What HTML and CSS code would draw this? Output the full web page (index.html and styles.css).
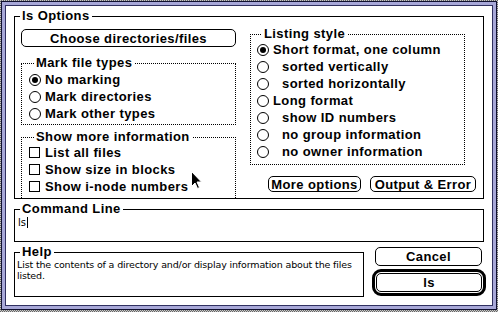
FILE: index.html
```html
<!DOCTYPE html>
<html lang="en">
<head>
    <meta charset="UTF-8">
    <title>ls Options</title>
    <link rel="stylesheet" href="styles.css">
</head>
<body>
    <div class="window">
        <fieldset class="group options">
            <legend>ls Options</legend>
            <div class="options-grid">
                <div class="col">
                    <div class="btn choose">Choose directories/files</div>
                    <fieldset class="group dotted marks">
                        <legend>Mark file types</legend>
                        <div class="row"><span class="radio on"></span>No marking</div>
                        <div class="row"><span class="radio"></span>Mark directories</div>
                        <div class="row"><span class="radio"></span>Mark other types</div>
                    </fieldset>
                    <fieldset class="group dotted info">
                        <legend>Show more information</legend>
                        <div class="row"><span class="check"></span>List all files</div>
                        <div class="row"><span class="check"></span>Show size in blocks</div>
                        <div class="row"><span class="check"></span>Show i-node numbers</div>
                    </fieldset>
                </div>
                <div class="col">
                    <fieldset class="group dotted listing">
                        <legend>Listing style</legend>
                        <div class="row"><span class="radio on"></span>Short format, one column</div>
                        <div class="row sub"><span class="radio"></span>sorted vertically</div>
                        <div class="row sub"><span class="radio"></span>sorted horizontally</div>
                        <div class="row"><span class="radio"></span>Long format</div>
                        <div class="row sub"><span class="radio"></span>show ID numbers</div>
                        <div class="row sub"><span class="radio"></span>no group information</div>
                        <div class="row sub"><span class="radio"></span>no owner information</div>
                    </fieldset>
                    <div class="btn-row">
                        <div class="btn more">More options</div>
                        <div class="btn output">Output &amp; Error</div>
                    </div>
                </div>
            </div>
        </fieldset>

        <fieldset class="group command">
            <legend>Command Line</legend>
            <div class="cmd">ls<span class="caret"></span></div>
        </fieldset>

        <div class="bottom">
            <fieldset class="group help">
                <legend>Help</legend>
                <p>List the contents of a directory and/or display information about the files listed.</p>
            </fieldset>
            <div class="actions">
                <div class="btn cancel">Cancel</div>
                <div class="default-ring"><div class="btn">ls</div></div>
            </div>
        </div>

        <!-- mouse pointer -->
        <svg class="pointer" width="12" height="19" viewBox="0 0 12 19">
            <path d="M0.5 0.5 L0.5 15.5 L4 12 L6.5 17.5 L8.5 16.5 L6 11 L10.5 11 Z" fill="#000" stroke="#fff" stroke-width="1"/>
        </svg>
    </div>
</body>
</html>
```

FILE: styles.css
```css
body {
    margin: 0;
    width: 498px;
    height: 312px;
    overflow: hidden;
    background: repeating-conic-gradient(#666 0 25%, #c8c8c8 0 50%) 0 0 / 2px 2px;
    font-family: "Liberation Sans", Arial, sans-serif;
    color: #000;
}

.window {
    position: relative;
    box-sizing: border-box;
    width: 496px;
    height: 309px;
    margin: 1px 0 0 1px;
    padding: 4px;
    background: #fff;
    border: 1px solid #101030;
    box-shadow: inset 0 0 0 3px #a8a8d8, inset 0 0 0 4px #303060;
}

.group {
    margin: 0;
    padding: 0;
    min-width: 0;
    border: 1px solid #000;
}

.group legend {
    margin-left: 5px;
    padding: 0 2px;
    font-size: 13px;
    font-weight: bold;
    line-height: 14px;
    letter-spacing: 0.4px;
}

.dotted {
    border-style: dotted;
}

.options {
    box-sizing: border-box;
    width: 470px;
    height: 190px;
    margin: 3px 0 0 8px;
}

.options-grid {
    display: grid;
    grid-template-columns: 215px 215px;
    column-gap: 14px;
    padding-left: 6px;
    height: 175px;
}

.col {
    display: flex;
    flex-direction: column;
}

.row {
    display: flex;
    align-items: center;
    height: 17px;
    font-size: 13px;
    font-weight: bold;
    letter-spacing: 0.4px;
    white-space: nowrap;
}

.row.sub .radio {
    margin-right: 13px;
}

.radio,
.check {
    flex-shrink: 0;
    box-sizing: border-box;
    border: 1px solid #000;
    background: #fff;
    margin-right: 4px;
}

.radio {
    width: 12px;
    height: 12px;
    border-radius: 50%;
    display: flex;
    align-items: center;
    justify-content: center;
}

.radio.on::after {
    content: "";
    width: 6px;
    height: 6px;
    border-radius: 50%;
    background: #000;
}

.check {
    width: 11px;
    height: 11px;
    margin-right: 5px;
}

.btn {
    box-sizing: border-box;
    display: flex;
    align-items: center;
    justify-content: center;
    border: 1px solid #000;
    border-radius: 5px;
    background: #fff;
    font-size: 13px;
    font-weight: bold;
    letter-spacing: 0.4px;
    white-space: nowrap;
}

.choose {
    height: 18px;
    margin-top: 6px;
}

.marks {
    margin-top: 9px;
    padding: 1px 0 2px 7px;
}

.info {
    flex: 1;
    margin-top: 5px;
    padding: 0 0 0 7px;
    border-bottom: none;
}

.listing {
    margin-top: 4px;
    padding: 0 0 4px 6px;
}

.btn-row {
    display: flex;
    justify-content: flex-end;
    gap: 9px;
    margin: 11px -11px 0 0;
}

.btn-row .btn {
    height: 16px;
    padding: 0 4px;
}

.more {
    width: 93px;
}

.output {
    width: 106px;
}

.command {
    box-sizing: border-box;
    width: 470px;
    height: 40px;
    margin: 3px 0 0 8px;
}

.cmd {
    display: flex;
    align-items: center;
    height: 12px;
    padding-left: 3px;
    font-family: "DejaVu Sans", sans-serif;
    font-size: 10px;
}

.caret {
    display: inline-block;
    width: 1px;
    height: 11px;
    margin-left: 1px;
    background: #000;
}

.bottom {
    display: flex;
    align-items: flex-start;
    margin: 3px 0 0 8px;
}

.help {
    box-sizing: border-box;
    width: 350px;
    height: 52px;
}

.help p {
    margin: 0;
    padding: 0 2px 0 2px;
    font-family: "DejaVu Sans", sans-serif;
    font-size: 9.5px;
    letter-spacing: -0.15px;
    line-height: 11px;
}

.actions {
    width: 114px;
    margin-left: 8px;
}

.cancel {
    height: 19px;
    margin: 2px 4px 0 3px;
}

.default-ring {
    box-sizing: border-box;
    height: 27px;
    margin-top: 3px;
    padding: 1px;
    border: 3px solid #000;
    border-radius: 9px;
}

.default-ring .btn {
    height: 19px;
}

.pointer {
    position: absolute;
    left: 189px;
    top: 169px;
}
```
